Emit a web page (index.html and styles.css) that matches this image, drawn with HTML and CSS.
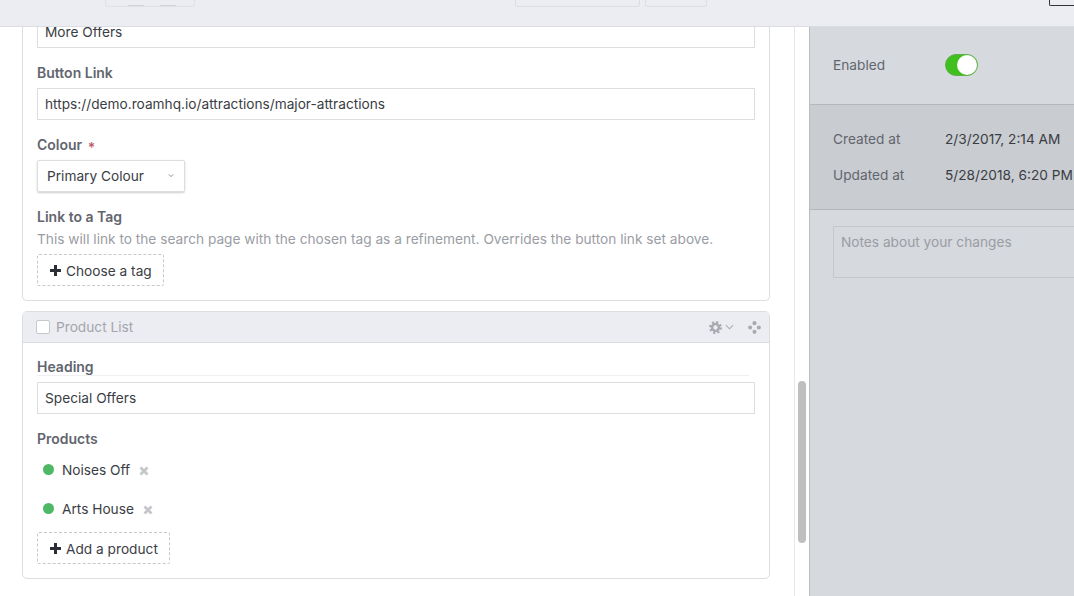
FILE: index.html
```html
<!DOCTYPE html>
<html lang="en">
<head>
<meta charset="utf-8">
<title>Edit entry</title>
<link rel="stylesheet" href="styles.css">
</head>
<body>
<header class="topbar">
  <div class="btn-group group-left"><span class="stub"></span><span class="stub"></span></div>
  <div class="top-center">
    <span class="top-btn wide"></span>
    <span class="top-btn narrow"></span>
  </div>
  <span class="top-corner"></span>
</header>
<div class="workspace">
  <main class="content">
    <section class="card first">
      <div class="card-body">
        <div class="field"><div class="input">More Offers</div></div>
        <div class="field">
          <label class="label">Button Link</label>
          <div class="input">https://demo.roamhq.io/attractions/major-attractions</div>
        </div>
        <div class="field">
          <label class="label">Colour <span class="req">*</span></label>
          <div class="select">Primary Colour
            <svg class="chev" viewBox="0 0 8 6" width="6" height="5"><path d="M1 1.500 4 4.500 7 1.500" fill="none" stroke="#666a72" stroke-width="1"/></svg>
          </div>
        </div>
        <div class="field">
          <label class="label">Link to a Tag</label>
          <div class="help">This will link to the search page with the chosen tag as a refinement. Overrides the button link set above.</div>
          <div class="dashed"><svg class="plus" viewBox="0 0 11 11" width="11" height="11"><path d="M4 0h3v4h4v3H7v4H4V7H0V4h4z" fill="#2b2e35"/></svg>Choose a tag</div>
        </div>
      </div>
    </section>
    <section class="card">
      <div class="card-head">
        <span class="check"></span>
        <span class="card-title">Product List</span>
        <span class="head-tools">
          <svg viewBox="0 0 14 14" width="13" height="13"><g fill="none" stroke="#a9abb1"><circle cx="7" cy="7" r="5.600" stroke-width="2.800" stroke-dasharray="2.200 2.200"/><circle cx="7" cy="7" r="3.700" stroke-width="2.800"/></g></svg>
          <svg class="tool-chev" viewBox="0 0 10 6" width="9" height="6"><path d="M1 1 5 5 9 1" fill="none" stroke="#a9abb1" stroke-width="1.200"/></svg>
          <svg viewBox="0 0 14 14" width="13" height="13"><g fill="#a9abb1"><circle cx="7" cy="2.300" r="2.200"/><circle cx="2.300" cy="7" r="2.200"/><circle cx="11.700" cy="7" r="2.200"/><circle cx="7" cy="11.700" r="2.200"/></g></svg>
        </span>
      </div>
      <div class="card-body">
        <div class="field">
          <label class="label ruled">Heading</label>
          <div class="input">Special Offers</div>
        </div>
        <div class="field">
          <label class="label">Products</label>
          <ul class="chips">
            <li class="chip"><span class="dot"></span>Noises Off<svg class="x" viewBox="0 0 10 10" width="10" height="10"><path d="M1.500 1.500l7 7M8.500 1.500l-7 7" stroke="#c4c6ca" stroke-width="2.800" fill="none"/></svg></li>
            <li class="chip"><span class="dot"></span>Arts House<svg class="x" viewBox="0 0 10 10" width="10" height="10"><path d="M1.500 1.500l7 7M8.500 1.500l-7 7" stroke="#c4c6ca" stroke-width="2.800" fill="none"/></svg></li>
          </ul>
          <div class="dashed"><svg class="plus" viewBox="0 0 11 11" width="11" height="11"><path d="M4 0h3v4h4v3H7v4H4V7H0V4h4z" fill="#2b2e35"/></svg>Add a product</div>
        </div>
      </div>
    </section>
    <span class="scrollbar"></span>
  </main>
  <aside class="sidebar">
    <div class="side-row enabled">
      <span class="side-label">Enabled</span>
      <span class="toggle"><span class="knob"></span></span>
    </div>
    <div class="meta">
      <div class="meta-row"><span class="side-label">Created at</span><span class="side-value">2/3/2017, 2:14 AM</span></div>
      <div class="meta-row"><span class="side-label">Updated at</span><span class="side-value">5/28/2018, 6:20 PM</span></div>
    </div>
    <div class="notes"><div class="notes-box">Notes about your changes</div></div>
  </aside>
</div>
</body>
</html>
```
FILE: styles.css
```css
* { box-sizing: border-box; }
html, body { margin: 0; height: 100%; overflow: hidden; }
body {
  display: flex;
  flex-direction: column;
  width: 1074px;
  height: 596px;
  background: #fff;
  color: #3a3d44;
  font: 13.700px/20px Inter, "Liberation Sans", sans-serif;
}
.topbar {
  position: relative;
  z-index: 2;
  flex: 0 0 27px;
  background: #ecedf2;
  border-bottom: 1px solid #dcdde1;
  display: flex;
  align-items: flex-start;
}
.btn-group {
  display: flex;
  align-items: flex-end;
  gap: 16px;
  margin-left: 105px;
  padding-left: 22px;
  width: 90px;
  height: 7px;
  border: 1px solid #e0e1e5;
  border-top: 0;
  border-radius: 0 0 3px 3px;
}
.stub { width: 16px; height: 1px; background: #d2d3d8; }
.top-center { display: flex; gap: 5px; margin-left: 320px; }
.top-btn {
  display: block;
  height: 7px;
  border: 1px solid #dcdde2;
  border-top: 0;
  border-radius: 0 0 3px 3px;
}
.wide { width: 125px; }
.narrow { width: 62px; }
.top-corner {
  margin-left: auto;
  width: 25px;
  height: 6px;
  border: 1px solid #333;
  border-top: 0;
  border-right: 0;
  border-radius: 0 0 0 2px;
}
.workspace { flex: 1; display: flex; min-height: 0; }
.content {
  position: relative;
  flex: 0 0 809px;
  padding: 0 39px 0 22px;
  overflow: hidden;
  background: linear-gradient(#e6e7ea, #e6e7ea) 794px 0 / 1px 100% no-repeat #fff;
}
.card {
  width: 748px;
  margin-bottom: 10px;
  border: 1px solid #dcdde1;
  border-radius: 5px;
}
.card.first { margin-top: -29px; border-top: 0; border-radius: 0 0 5px 5px; }
.card-body { padding: 14px; }
.first .card-body { padding-top: 18px; }
.field { margin-bottom: 15px; }
.field:last-child { margin-bottom: 0; }
.label {
  display: block;
  margin-bottom: 5px;
  font-size: 14px;
  font-weight: 600;
  color: #62656e;
}
.ruled {
  height: 19px;
  margin-right: 6px;
  margin-bottom: 6px;
  border-bottom: 1px solid #f0f0f2;
}
.req { color: #bb5f6a; margin-left: 2px; vertical-align: -3px; line-height: 1; }
.input {
  height: 32px;
  padding: 7px 7px;
  border: 1px solid #dcdde1;
  background: #fff;
  line-height: 16px;
}
.select {
  position: relative;
  width: 148px;
  height: 32px;
  padding: 5px 9px;
  border: 1px solid #dcdde1;
  border-radius: 2px;
  box-shadow: 0 1px 2px rgba(60, 65, 80, .25);
}
.chev { position: absolute; right: 10px; top: 12px; }
.help { color: #9a9da3; margin-top: -3px; margin-bottom: 5px; }
.dashed {
  display: inline-flex;
  align-items: center;
  height: 32px;
  padding: 1px 11px 0 12px;
  border: 1px dashed #c6c8cc;
  border-radius: 2px;
  vertical-align: top;
}
.plus { margin-right: 5px; }
.card-head {
  display: flex;
  align-items: center;
  height: 31px;
  padding: 0 8px 0 13px;
  background: #ecedf2;
  border-bottom: 1px solid #dcdde1;
  border-radius: 5px 5px 0 0;
}
.check {
  width: 14px;
  height: 14px;
  margin-right: 6px;
  background: #fff;
  border: 1px solid #c6c8cc;
  border-radius: 2px;
}
.card-title { color: #a3a5ab; }
.head-tools { margin-left: auto; display: flex; align-items: center; }
.tool-chev { margin-left: 3px; margin-right: 14px; }
.chips { list-style: none; margin: -4px 0 4px; padding: 0; }
.chip {
  display: flex;
  align-items: center;
  height: 39px;
  padding-left: 6px;
}
.dot {
  width: 11px;
  height: 11px;
  margin-right: 8px;
  border-radius: 50%;
  background: #4fb867;
}
.x { margin-left: 9px; margin-top: 2px; }
.scrollbar {
  position: absolute;
  left: 798px;
  top: 354px;
  width: 8px;
  height: 162px;
  border-radius: 4px;
  background: #bfbfbf;
}
.sidebar {
  flex: 1;
  min-width: 0;
  overflow: hidden;
  background: #d6d9de;
  border-left: 1px solid #b9bcc1;
}
.side-row { display: flex; align-items: center; padding: 0 23px; }
.enabled { height: 78px; padding-bottom: 2px; border-bottom: 1px solid #b4b7bc; }
.side-label { flex: 0 0 112px; color: #62656e; }
.toggle {
  position: relative;
  width: 33px;
  height: 22px;
  border-radius: 11px;
  background: #3fc01e;
  border: 1px solid #5fae4a;
}
.knob {
  position: absolute;
  right: 0;
  top: 0;
  width: 20px;
  height: 20px;
  border-radius: 50%;
  background: #fff;
}
.meta {
  height: 105px;
  padding: 16px 0 0 23px;
  background: #c9ccd1;
  border-bottom: 1px solid #b4b7bc;
}
.meta-row { display: flex; height: 36px; align-items: center; white-space: nowrap; }
.notes { padding: 16px 0 0 23px; }
.notes-box {
  width: 300px;
  height: 52px;
  padding: 5px 7px;
  border: 1px solid #c4c7cc;
  color: #9a9da3;
}
```
